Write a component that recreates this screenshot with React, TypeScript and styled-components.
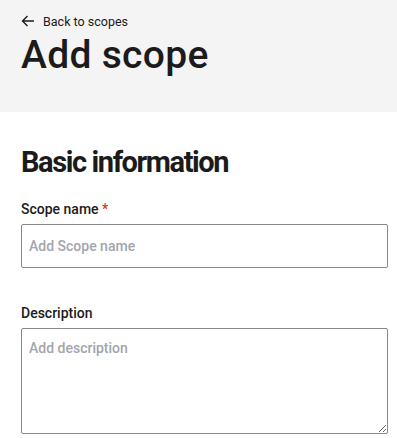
import React from "react";
import styled, { createGlobalStyle } from "styled-components";

const GlobalStyle = createGlobalStyle`
  body {
    margin: 0;
    background: #ffffff;
    font-family: Roboto, "Liberation Sans", sans-serif;
    color: #1b1b1b;
  }
`;

const App: React.FC = () => {
  return (
    <>
      <GlobalStyle />
      <Header>
        <BackLink href="#">
          <svg width="14" height="14" viewBox="0 0 14 14" fill="none">
            <path d="M13 7H1.5M6.5 2L1.5 7l5 5" stroke="#1b1b1b" strokeWidth="1.4" />
          </svg>
          Back to scopes
        </BackLink>
        <PageTitle>Add scope</PageTitle>
      </Header>
      <Main>
        <SectionTitle>Basic information</SectionTitle>
        <Field>
          <Label>
            Scope name <Required>*</Required>
          </Label>
          <TextInput placeholder="Add Scope name" />
        </Field>
        <Field>
          <Label>Description</Label>
          <TextArea placeholder="Add description" />
        </Field>
      </Main>
    </>
  );
};

const Header = styled.header`
  background: #f4f4f4;
  height: 112px;
  box-sizing: border-box;
  padding: 12px 9px 0 21px;
`;

const BackLink = styled.a`
  display: flex;
  align-items: center;
  gap: 8px;
  font-size: 12.5px;
  color: #1b1b1b;
  text-decoration: none;
  height: 18px;
`;

const PageTitle = styled.h1`
  margin: 2px 0 0;
  font-size: 39px;
  font-weight: 500;
  letter-spacing: 0.3px;
  line-height: 46px;
  color: #1b1b1b;
`;

const Main = styled.main`
  padding: 33px 9px 0 21px;
  display: flex;
  flex-direction: column;
`;

const SectionTitle = styled.h2`
  margin: 0 0 20px;
  font-size: 29px;
  font-weight: 700;
  letter-spacing: -1.4px;
  line-height: 34px;
`;

const Field = styled.div`
  display: flex;
  flex-direction: column;
  margin-bottom: 35px;
`;

const Label = styled.label`
  font-size: 14px;
  font-weight: 500;
  line-height: 20px;
  margin-bottom: 5px;
`;

const Required = styled.span`
  color: #d83b01;
`;

const TextInput = styled.input`
  box-sizing: border-box;
  width: 100%;
  height: 44px;
  border: 1px solid #8a8a8a;
  border-radius: 2px;
  padding: 0 7px;
  font-family: Roboto, "Liberation Sans", sans-serif;
  font-size: 14px;
  font-weight: 500;
  &::placeholder {
    color: #a3a6ad;
  }
`;

const TextArea = styled.textarea`
  box-sizing: border-box;
  width: 100%;
  height: 106px;
  border: 1px solid #8a8a8a;
  border-radius: 2px;
  padding: 11px 7px;
  font-family: Roboto, "Liberation Sans", sans-serif;
  font-size: 14px;
  font-weight: 500;
  &::placeholder {
    color: #a3a6ad;
  }
`;

export default App;
